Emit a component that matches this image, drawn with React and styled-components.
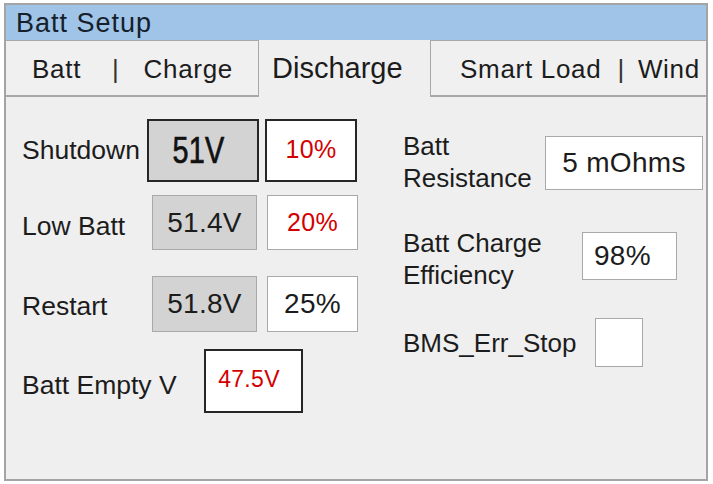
import styled, { createGlobalStyle } from "styled-components";

const GlobalStyle = createGlobalStyle`
  body {
    margin: 0;
    background: #fff;
    font-family: "Liberation Sans", Arial, sans-serif;
    color: #1c1c1c;
  }
`;

export default function App() {
  return (
    <>
      <GlobalStyle />
      <Page>
        <Frame>
          <TitleBar>Batt Setup</TitleBar>
          <Tabs>
            <Tab $w={253} $pl={26}>
              <span>Batt</span>
              <Sep $l={31} $r={24}>|</Sep>
              <span>Charge</span>
            </Tab>
            <ActiveTab>Discharge</ActiveTab>
            <Tab $pl={29} $grow $left>
              <span>Smart Load</span>
              <Sep $l={16} $r={13}>|</Sep>
              <span>Wind</span>
            </Tab>
          </Tabs>
          <Content>
            <LeftCol>
              <Row $mt={0}>
                <Label $w={125}>Shutdown</Label>
                <Field $w={112} $h={63} $strong $gray $pr={9}>
                  <BigValue>51V</BigValue>
                </Field>
                <Field $w={92} $h={63} $strong $red $size={25} $ml={6} $dy={-2}>
                  10%
                </Field>
              </Row>
              <Row $mt={13}>
                <Label $w={130} $dy={8}>Low Batt</Label>
                <Field $w={105} $h={55} $gray $size={28}>
                  51.4V
                </Field>
                <Field $w={91} $h={55} $red $size={25} $ml={10}>
                  20%
                </Field>
              </Row>
              <Row $mt={26}>
                <Label $w={130} $dy={4}>Restart</Label>
                <Field $w={105} $h={56} $gray $size={28}>
                  51.8V
                </Field>
                <Field $w={91} $h={56} $size={28} $ml={10}>
                  25%
                </Field>
              </Row>
              <Row $mt={17}>
                <Label $w={182} $dy={8}>Batt Empty V</Label>
                <Field $w={99} $h={64} $strong $red $size={23} $pr={9} $dy={-4}>
                  47.5V
                </Field>
              </Row>
            </LeftCol>
            <RightCol>
              <SideRow $mt={0}>
                <SideLabel $w={142}>
                  Batt
                  <br />
                  Resistance
                </SideLabel>
                <Field $w={158} $h={54} $size={28} $top={6}>
                  5 mOhms
                </Field>
              </SideRow>
              <SideRow $mt={33}>
                <SideLabel $w={179}>
                  Batt Charge
                  <br />
                  Efficiency
                </SideLabel>
                <Field $w={95} $h={48} $size={28} $top={5} $left>
                  98%
                </Field>
              </SideRow>
              <SideRow $mt={27} $center>
                <SideLabel $w={192}>BMS_Err_Stop</SideLabel>
                <CheckBox />
              </SideRow>
            </RightCol>
          </Content>
        </Frame>
      </Page>
    </>
  );
}

const Page = styled.div`
  padding: 3px 0 0 4px;
`;

const Frame = styled.div`
  box-sizing: border-box;
  width: 704px;
  height: 478px;
  border: 2px solid #a4a4a4;
  background: #efefef;
  display: flex;
  flex-direction: column;
`;

const TitleBar = styled.div`
  height: 35px;
  line-height: 36px;
  padding-left: 10px;
  background: #9fc4e8;
  font-size: 27px;
  letter-spacing: 1px;
  color: #15202b;
`;

const Tabs = styled.div`
  display: flex;
  height: 57px;
`;

const Tab = styled.div`
  box-sizing: border-box;
  display: flex;
  align-items: center;
  ${(p) => (p.$grow ? "flex: 1;" : `width: ${p.$w}px;`)}
  padding-left: ${(p) => p.$pl}px;
  padding-top: 2px;
  background: #f0f0f0;
  border-top: 1px solid #a8a8a8;
  border-bottom: 2px solid #a8a8a8;
  ${(p) =>
    p.$left
      ? "border-left: 1px solid #a8a8a8;"
      : "border-right: 1px solid #a8a8a8;"}
  font-size: 26px;
  letter-spacing: 0.7px;
  color: #1c1c1c;
`;

const Sep = styled.span`
  margin: 0 ${(p) => p.$r}px 0 ${(p) => p.$l}px;
  color: #333;
`;

const ActiveTab = styled.div`
  box-sizing: border-box;
  width: 171px;
  display: flex;
  align-items: center;
  padding-left: 13px;
  font-size: 29px;
  background: #efefef;
  color: #1c1c1c;
`;

const Content = styled.div`
  flex: 1;
  display: flex;
  padding-left: 16px;
`;

const LeftCol = styled.div`
  width: 381px;
  padding-top: 22px;
  display: flex;
  flex-direction: column;
`;

const Row = styled.div`
  display: flex;
  align-items: center;
  margin-top: ${(p) => p.$mt}px;
`;

const Label = styled.div`
  width: ${(p) => p.$w}px;
  font-size: 26.5px;
  padding-top: ${(p) => p.$dy || 0}px;
  white-space: nowrap;
`;

const Field = styled.div`
  box-sizing: border-box;
  width: ${(p) => p.$w}px;
  height: ${(p) => p.$h}px;
  margin-left: ${(p) => p.$ml || 0}px;
  margin-top: ${(p) => (p.$top !== undefined ? `${p.$top}px` : "0")};
  display: flex;
  align-items: center;
  justify-content: ${(p) => (p.$left ? "flex-start" : "center")};
  padding-left: ${(p) => (p.$left ? "11px" : "0")};
  padding-right: ${(p) => p.$pr || 0}px;
  padding-bottom: ${(p) => (p.$dy ? -p.$dy : 0)}px;
  background: ${(p) => (p.$gray ? "#d3d3d3" : "#fff")};
  border: ${(p) => (p.$strong ? "2px solid #262626" : "1px solid #a9a9a9")};
  color: ${(p) => (p.$red ? "#d40000" : "#1c1c1c")};
  font-size: ${(p) => p.$size || 26}px;
  letter-spacing: 0.3px;
  white-space: nowrap;
`;

const BigValue = styled.span`
  display: inline-block;
  font-size: 36px;
  transform: scaleX(0.8);
  color: #111;
  -webkit-text-stroke: 0.7px #111;
`;

const RightCol = styled.div`
  flex: 1;
  padding-top: 33px;
  display: flex;
  flex-direction: column;
`;

const SideRow = styled.div`
  display: flex;
  align-items: ${(p) => (p.$center ? "center" : "flex-start")};
  margin-top: ${(p) => p.$mt}px;
`;

const SideLabel = styled.div`
  width: ${(p) => p.$w}px;
  font-size: 26px;
  line-height: 32px;
  white-space: nowrap;
`;

const CheckBox = styled.div`
  box-sizing: border-box;
  width: 48px;
  height: 49px;
  background: #fff;
  border: 1px solid #a9a9a9;
`;
